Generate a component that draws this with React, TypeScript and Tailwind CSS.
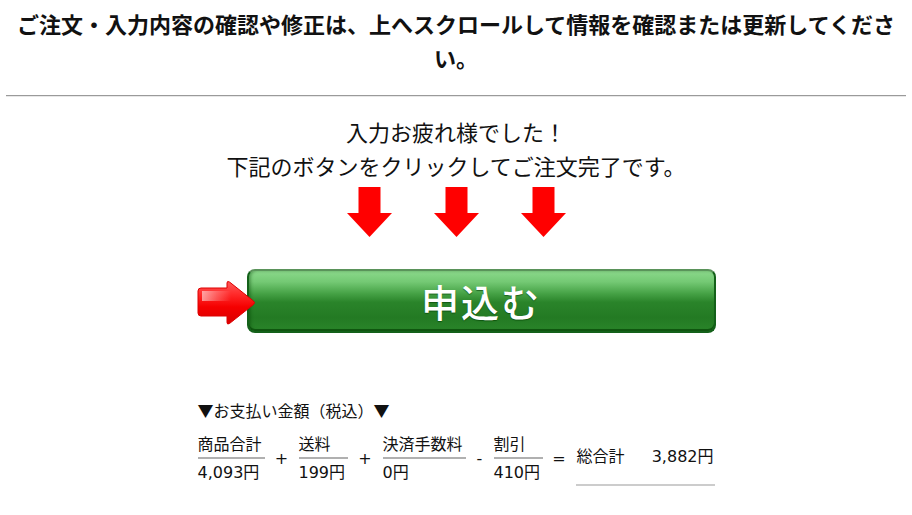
import React from "react";

function DownArrow() {
  return (
    <svg width="45" height="50" viewBox="0 0 45 50" className="block">
      <polygon points="11.5,0 33.5,0 33.5,26 45,26 22.5,50 0,26 11.5,26" fill="#ff0000" />
    </svg>
  );
}

function PointerArrow() {
  return (
    <svg width="59" height="46" viewBox="0 0 59 46" className="relative z-10 -mr-[9px] mt-[4px] block">
      <defs>
        <linearGradient id="arrowFill" x1="0" y1="0" x2="0" y2="1">
          <stop offset="0" stopColor="#ff5a5a" />
          <stop offset="0.3" stopColor="#ff2a2a" />
          <stop offset="0.6" stopColor="#f50000" />
          <stop offset="1" stopColor="#d80000" />
        </linearGradient>
        <linearGradient id="arrowShine" x1="0" y1="0" x2="1" y2="0">
          <stop offset="0" stopColor="#ffffff" stopOpacity="0.55" />
          <stop offset="0.5" stopColor="#ffffff" stopOpacity="0.25" />
          <stop offset="1" stopColor="#ffffff" stopOpacity="0" />
        </linearGradient>
      </defs>
      <path
        d="M4,8 H30 V3 Q30,0.5 32.5,2 L56.5,21 Q58.5,22.5 56.5,24.5 L32.5,43.5 Q30,45 30,42.5 V36 H4 Q1,36 1,33 V11 Q1,8 4,8 Z"
        fill="url(#arrowFill)"
        stroke="#dd0000"
        strokeWidth="1"
      />
      <path d="M5,11 H34 V21 H5 Z" fill="url(#arrowShine)" />
    </svg>
  );
}

function Fraction({ label, value, width }: { label: string; value: string; width: string }) {
  return (
    <div className={`flex flex-col ${width}`}>
      <div className="border-b-2 border-[#b0b0b0] leading-[24px] whitespace-nowrap">{label}</div>
      <div className="pt-[2px] leading-[24px] whitespace-nowrap">{value}</div>
    </div>
  );
}

function Op({ sign, width }: { sign: string; width: string }) {
  return <div className={`flex h-[52px] items-center justify-center ${width}`}>{sign}</div>;
}

export default function App() {
  return (
    <div className="min-h-[515px] w-[912px] bg-white font-['Noto_Sans_CJK_JP',sans-serif] text-[#111]">
      <h1 className="px-[10px] pt-[6px] text-center text-[22px] font-bold leading-[34px]">
        ご注文・入力内容の確認や修正は、上へスクロールして情報を確認または更新してください。
      </h1>

      <div className="mx-[6px] mt-[21px] border-t border-b border-t-[#9a9a9a] border-b-[#e8e8e8]" />

      <p className="mt-[17px] text-center text-[22px] leading-[34px]">
        入力お疲れ様でした！
        <br />
        下記のボタンをクリックしてご注文完了です。
      </p>

      <div className="mt-[5px] flex justify-center gap-[42px]">
        <DownArrow />
        <DownArrow />
        <DownArrow />
      </div>

      <div className="mx-auto mt-[32px] flex w-[519px] items-center">
        <PointerArrow />
        <button
          type="button"
          className="relative flex h-[64px] w-[469px] items-center justify-center rounded-[8px] border-2 border-[#14611a] border-t-[#5a935a] bg-[linear-gradient(to_bottom,#8bd98b_0%,#74c974_18%,#45a145_38%,#2a842a_52%,#237a23_78%,#2a852a_100%)] shadow-[inset_0_-2px_0_#0f550f,inset_2px_0_3px_rgba(0,60,0,0.35)]"
        >
          <span className="text-[38px] font-medium leading-none tracking-[2px] text-white [text-shadow:0_1px_1px_rgba(0,60,0,0.6)]">
            申込む
          </span>
        </button>
      </div>

      <div className="mx-auto mt-[65px] w-[517px] text-[16px]">
        <div className="leading-[24px]">▼お支払い金額（税込）▼</div>
        <div className="mt-[11px] flex items-start font-['DejaVu_Sans','Noto_Sans_CJK_JP',sans-serif]">
          <Fraction label="商品合計" value="4,093円" width="w-[67px]" />
          <Op sign="+" width="w-[34px]" />
          <Fraction label="送料" value="199円" width="w-[49px]" />
          <Op sign="+" width="w-[35px]" />
          <Fraction label="決済手数料" value="0円" width="w-[83px]" />
          <Op sign="-" width="w-[28px]" />
          <Fraction label="割引" value="410円" width="w-[49px]" />
          <Op sign="=" width="w-[33px]" />
          <div className="flex h-[53px] w-[139px] flex-col border-b-2 border-[#cccccc]">
            <div className="flex justify-between px-[1px] pt-[12px] leading-[24px]">
              <span>総合計</span>
              <span>3,882円</span>
            </div>
          </div>
        </div>
      </div>
    </div>
  );
}
